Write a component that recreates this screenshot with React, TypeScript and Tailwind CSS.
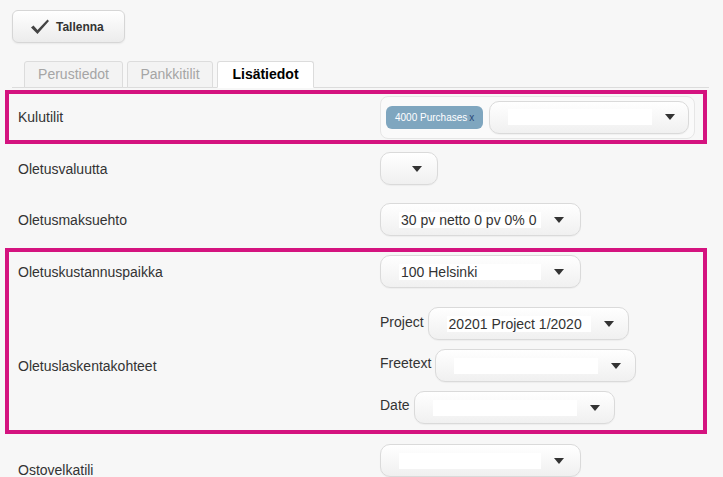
import { ReactNode } from 'react';

const Caret = () => (
  <svg width="10" height="6" viewBox="0 0 10 6" className="shrink-0">
    <path d="M0 0 L10 0 L5 6 Z" fill="#333" />
  </svg>
);

interface SelectProps {
  text?: string;
  width?: string;
  field?: string;
}

// dropdown with white value field and caret
const Select = ({ text, width = 'w-[201px]', field = 'w-[142px]' }: SelectProps) => (
  <div
    className={`${width} flex h-[33px] shrink-0 items-center rounded-[10px] border border-[#dadada] bg-gradient-to-b from-white to-[#f0f0f0] pl-[18px] shadow-[0_1px_1px_rgba(0,0,0,0.04)]`}
  >
    <div className={`${field} flex h-[16px] items-center bg-white indent-[2px] text-[14px] leading-none text-[#333]`}>
      {text}
    </div>
    <div className="ml-[13px]">
      <Caret />
    </div>
  </div>
);

interface RowProps {
  label: string;
  boxed?: boolean;
  className?: string;
  labelClass?: string;
  children: ReactNode;
}

const Row = ({ label, boxed, className = '', labelClass = '', children }: RowProps) => (
  <div
    className={`flex border-4 ${boxed ? 'border-[#d4137f]' : 'border-transparent'} ${className}`}
  >
    <div className={`w-[371px] shrink-0 pl-[9px] text-[14px] leading-[16px] text-[#333] ${labelClass}`}>
      {label}
    </div>
    <div className="flex flex-col">{children}</div>
  </div>
);

const SubRow = ({ label, children }: { label: string; children: ReactNode }) => (
  <div className="flex items-center gap-[4px]">
    <span className="-mt-[3px] text-[14px] text-[#333]">{label}</span>
    {children}
  </div>
);

export default function App() {
  return (
    <div
      className="min-h-screen bg-[#f7f7f7] text-[#333]"
      style={{ fontFamily: '"Liberation Sans", Arial, sans-serif' }}
    >
      {/* Toolbar */}
      <div className="px-[12px] pt-[10px]">
        <button className="flex h-[33px] w-[113px] items-center rounded-[6px] border border-[#d6d6d6] bg-gradient-to-b from-white to-[#ececec] pl-[17px] shadow-[0_1px_2px_rgba(0,0,0,0.06)]">
          <svg width="20" height="16" viewBox="0 0 20 16">
            <path d="M1 8.5 L3.5 6.5 L7.5 11 L17.5 0.5 L19 2 L7.5 15 Z" fill="#444" />
          </svg>
          <span className="ml-[6px] text-[12px] font-bold text-[#333]">Tallenna</span>
        </button>
      </div>

      {/* Tabs */}
      <div className="ml-[12px] mr-[14px] mt-[18px] flex gap-[4px] border-b border-[#dcdcdc] pl-[12px]">
        <div className="-mb-px flex h-[27px] w-[99px] items-center justify-center rounded-t-[3px] border border-[#dcdcdc] bg-[#f3f3f3] text-[14px] text-[#a5a5a5]">
          Perustiedot
        </div>
        <div className="-mb-px flex h-[27px] w-[86px] items-center justify-center rounded-t-[3px] border border-[#dcdcdc] bg-[#f3f3f3] text-[14px] text-[#a5a5a5]">
          Pankkitilit
        </div>
        <div className="-mb-px flex h-[27px] w-[97px] items-center justify-center rounded-t-[3px] border border-[#dcdcdc] border-b-white bg-white text-[14px] font-bold text-black">
          Lisätiedot
        </div>
      </div>

      <div className="w-[707px] pl-[5px] pt-[2px]">
        <Row label="Kulutilit" boxed className="h-[54px] items-center">
          <div className="flex h-[43px] w-[315px] items-center rounded-[8px] border border-[#e6e6e6] bg-[#fafafa] pl-[5px]">
            <div className="flex h-[23px] items-center rounded-[6px] bg-[#7fa6bf] px-[9px] text-[10px] text-white">
              4000 Purchases<span className="ml-[2px] text-[#2c4a78]">x</span>
            </div>
            <div className="ml-[6px]">
              <Select width="w-[200px]" field="w-[144px]" />
            </div>
          </div>
        </Row>

        <Row label="Oletusvaluutta" className="h-[51px] items-center pb-[2px]">
          <Select width="w-[58px]" field="w-0" />
        </Row>

        <Row label="Oletusmaksuehto" className="h-[53px] items-center pb-[4px]">
          <Select text="30 pv netto 0 pv 0% 0" />
        </Row>

        <div className="border-4 border-[#d4137f] pb-[6px] pt-[3px]">
          <div className="flex items-center">
            <div className="w-[371px] pl-[9px] text-[14px] leading-[16px]">Oletuskustannuspaikka</div>
            <Select text="100 Helsinki" />
          </div>
          <div className="mt-[19px] flex items-center">
            <div className="w-[371px] pl-[9px] text-[14px] leading-[16px]">Oletuslaskentakohteet</div>
            <div className="flex flex-col gap-[8px]">
              <SubRow label="Project">
                <Select text="20201 Project 1/2020" field="w-[144px]" />
              </SubRow>
              <SubRow label="Freetext">
                <div className="pt-[1px]">
                  <Select field="w-[144px]" />
                </div>
              </SubRow>
              <SubRow label="Date">
                <div className="pt-[1px]">
                  <Select field="w-[144px]" />
                </div>
              </SubRow>
            </div>
          </div>
        </div>

        <Row label="Ostovelkatili" className="items-start pt-[6px]" labelClass="pt-[18px]">
          <Select />
        </Row>
      </div>
    </div>
  );
}
